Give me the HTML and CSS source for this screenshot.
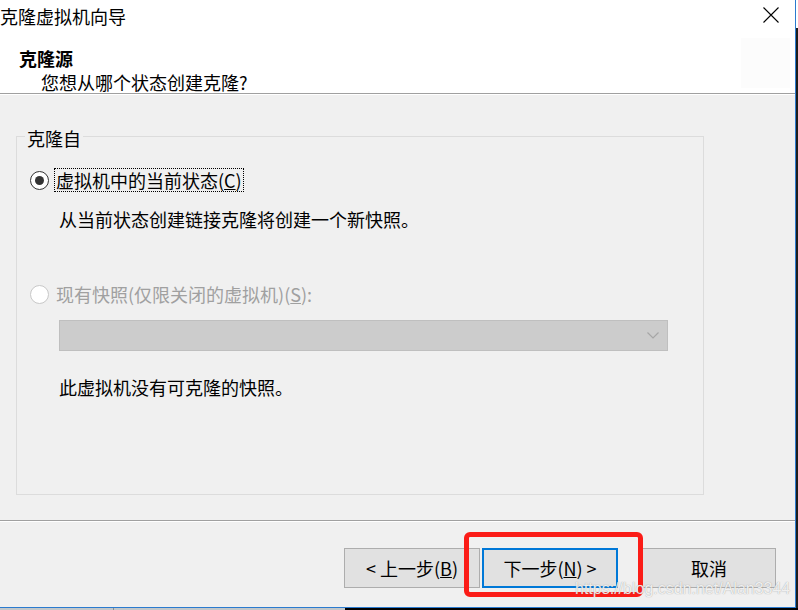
FILE: index.html
```html
<!DOCTYPE html>
<html lang="zh-CN">
<head>
<meta charset="utf-8">
<title>克隆虚拟机向导</title>
<link rel="stylesheet" href="styles.css">
</head>
<body>
<div class="screen">
  <div class="main">
    <div class="window">
      <div class="top">
        <div class="titlebar">
          <span class="title">克隆虚拟机向导</span>
          <svg class="close" width="16" height="16" viewBox="0 0 16 16"><path d="M0.5 0.5 L15.5 15.5 M15.5 0.5 L0.5 15.5" stroke="#000" stroke-width="1.1" fill="none"/></svg>
        </div>
        <div class="header">
          <div class="header-text">
            <div class="heading">克隆源</div>
            <div class="subheading">您想从哪个状态创建克隆?</div>
          </div>
          <div class="header-icon"></div>
        </div>
      </div>
      <div class="sep"></div>
      <div class="body">
        <div class="group">
          <span class="legend">克隆自</span>
          <div class="radio-row">
            <span class="radio checked"></span>
            <span class="radio-label focus">虚拟机中的当前状态(<u>C</u>)</span>
          </div>
          <p class="desc">从当前状态创建链接克隆将创建一个新快照。</p>
          <div class="radio-row disabled">
            <span class="radio"></span>
            <span class="radio-label">现有快照(仅限关闭的虚拟机)(<u>S</u>):</span>
          </div>
          <div class="select">
            <svg width="12" height="7" viewBox="0 0 12 7"><path d="M0.5 0.5 L6 6 L11.5 0.5" stroke="#a6a6a6" stroke-width="1.2" fill="none"/></svg>
          </div>
          <p class="desc note">此虚拟机没有可克隆的快照。</p>
        </div>
      </div>
      <div class="sep"></div>
      <div class="footer">
        <button class="btn">&lt; 上一步(<u>B</u>)</button>
        <button class="btn primary">下一步(<u>N</u>) &gt;</button>
        <button class="btn cancel">取消</button>
      </div>
    </div>
    <div class="edge">
      <div class="edge-top"></div>
      <div class="edge-rest"></div>
    </div>
  </div>
  <div class="bottom-strip">
    <div class="strip-gray"><span class="tick"></span></div>
    <div class="strip-black"></div>
  </div>
  <div class="highlight"></div>
  <div class="watermark">https://blog.csdn.net/Alan3344</div>
</div>
</body>
</html>
```
FILE: styles.css
```css
* { box-sizing: border-box; }
html, body { margin: 0; padding: 0; }
body {
  width: 798px;
  height: 610px;
  overflow: hidden;
  font-family: "Noto Sans CJK SC", "Noto Sans", sans-serif;
  font-size: 18px;
  line-height: 24px;
  color: #000;
  background: #1b1b1b;
}
.screen {
  position: relative;
  width: 798px;
  height: 610px;
  display: flex;
  flex-direction: column;
}
.main {
  display: flex;
  height: 608px;
}
.window {
  width: 796px;
  height: 608px;
  border-right: 1px solid #2b7bcf;
  border-bottom: 1px solid #2b7bcf;
  background: #f0f0f0;
  display: flex;
  flex-direction: column;
}
.edge {
  flex: 1;
  display: flex;
  flex-direction: column;
}
.edge-top { height: 28px; background: #fff; }
.edge-rest { flex: 1; background: #1e1e1e; }
.bottom-strip {
  height: 2px;
  display: flex;
}
.strip-gray {
  width: 345px;
  background: #c3c8cb;
  position: relative;
}
.tick {
  position: absolute;
  left: 113px;
  top: 0;
  width: 1px;
  height: 2px;
  background: #8a8f92;
}
.strip-black { flex: 1; background: #000; }

.top {
  height: 93px;
  background: #fff;
}
.titlebar {
  height: 34px;
  padding-top: 4px;
  display: flex;
  justify-content: space-between;
  align-items: flex-start;
}
.title { font-size: 18px; line-height: 24px; }
.close { margin-top: 3px; margin-right: 16px; }
.header {
  display: flex;
  justify-content: space-between;
  align-items: flex-start;
}
.header-text {
  padding-left: 19px;
  padding-top: 12px;
}
.heading { font-weight: bold; }
.subheading { padding-left: 22px; }
.header-icon {
  width: 49px;
  height: 50px;
  margin-top: 4px;
  margin-right: 5px;
  background: #fcfcfc;
}
.sep {
  height: 2px;
  border-top: 1px solid #a0a0a0;
  background: #fff;
}
.body {
  height: 425px;
  padding-top: 41px;
  padding-left: 16px;
}
.group {
  position: relative;
  width: 688px;
  height: 359px;
  border: 1px solid #dcdcdc;
  padding: 31px 0 0 13px;
}
.legend {
  position: absolute;
  left: 8px;
  top: -11px;
  padding: 0 2px;
  background: #f0f0f0;
  line-height: 24px;
}
.radio-row {
  display: flex;
  align-items: center;
  gap: 5px;
  height: 24px;
}
.radio {
  width: 19px;
  height: 19px;
  border: 1.5px solid #333;
  border-radius: 50%;
  background: #fff;
  display: flex;
  align-items: center;
  justify-content: center;
}
.radio.checked::after {
  content: "";
  width: 9px;
  height: 9px;
  border-radius: 50%;
  background: #333;
}
.radio-label {
  border: 1px dotted transparent;
  padding: 0 1px;
  line-height: 22px;
}
.radio-label.focus { border-color: #000; }
.disabled { color: #a0a0a0; }
.disabled .radio { border-color: #c8c8c8; }
.desc {
  margin: 15px 0 0;
  padding-left: 29px;
}
.disabled { margin-top: 51px; }
.select {
  margin: 14px 0 0 29px;
  width: 609px;
  height: 31px;
  background: #cccccc;
  border: 1px solid #bfbfbf;
  display: flex;
  align-items: center;
  justify-content: flex-end;
  padding-right: 8px;
}
.note { margin-top: 24px; }

.footer {
  height: 85px;
  display: flex;
  align-items: flex-start;
  padding: 26px 0 0 344px;
}
.btn {
  font: inherit;
  width: 136px;
  height: 40px;
  background: #e1e1e1;
  border: 1px solid #adadad;
  color: #000;
  padding: 0;
  margin: 0 2px 0 0;
}
.btn.primary { border: 2px solid #0078d7; margin-right: 24px; }
.btn.cancel { width: 134px; }

.highlight {
  position: absolute;
  left: 464px;
  top: 532px;
  width: 179px;
  height: 65px;
  border: 5px solid #fb1c17;
  border-radius: 6px;
}
.watermark {
  position: absolute;
  left: 575px;
  top: 579px;
  font-family: "Liberation Sans", Arial, sans-serif;
  font-size: 16px;
  line-height: 20px;
  color: rgba(255, 255, 255, 0.85);
  text-shadow: 0 0 1px rgba(110, 110, 110, 0.7);
}
```
